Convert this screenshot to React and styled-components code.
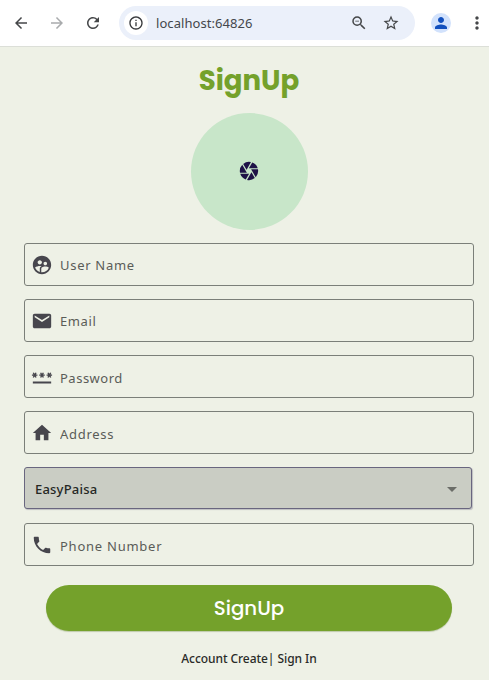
import React from 'react';
import styled, { createGlobalStyle } from 'styled-components';
import {
  MdArrowBack, MdArrowForward, MdRefresh, MdInfoOutline, MdZoomOut, MdStarBorder,
  MdPerson, MdMoreVert, MdCamera, MdSupervisedUserCircle, MdEmail, MdPassword,
  MdHome, MdPhone, MdArrowDropDown,
} from 'react-icons/md';

const GlobalStyle = createGlobalStyle`
  * { box-sizing: border-box; }
  body { margin: 0; background: #eef1e6; font-family: "Noto Sans", sans-serif; }
  button, input { font: inherit; }
`;

const Page = styled.div`
  height: 680px;
  overflow: hidden;
  background: #eef1e6;
`;

const Toolbar = styled.header`
  display: flex;
  align-items: center;
  height: 47px;
  padding: 0 4px 0 13px;
  background: #fff;
  border-bottom: 1px solid #dcdfd8;
`;

const ToolButton = styled.button`
  display: flex;
  align-items: center;
  justify-content: center;
  flex: none;
  width: 16px;
  height: 16px;
  padding: 0;
  margin-right: ${(p) => p.$gap || 0}px;
  border: 0;
  background: none;
  color: ${(p) => (p.$muted ? '#a9abad' : '#454749')};

  svg { flex: none; }
`;

const AddressBar = styled.div`
  display: flex;
  align-items: center;
  width: 296px;
  height: 34px;
  padding: 0 16px 0 5px;
  margin-right: 16px;
  border-radius: 17px;
  background: #ebf0fa;
`;

const SiteInfo = styled.span`
  display: grid;
  place-items: center;
  width: 24px;
  height: 24px;
  border-radius: 50%;
  background: #fff;
  color: #37393b;
`;

const Url = styled.span`
  flex: 1;
  margin-left: 8px;
  font-size: 13px;
  letter-spacing: 0.06px;
  color: #44474c;
`;

const Profile = styled.span`
  display: grid;
  place-items: center;
  width: 20px;
  height: 20px;
  margin-right: 18px;
  border-radius: 50%;
  background: #d2e2fc;
  color: #1250be;
`;

const Content = styled.main`
  display: flex;
  flex-direction: column;
  padding: 16px 15px 0 24px;
`;

const Title = styled.h1`
  margin: 0;
  height: 36px;
  font: 700 27.6px/36px Poppins, Inter, sans-serif;
  text-align: center;
  color: #74a12b;
`;

const Avatar = styled.div`
  display: grid;
  place-items: center;
  align-self: center;
  width: 117px;
  height: 117px;
  margin: 14px 0 13px;
  padding: 0 1px 1px 0;
  border-radius: 50%;
  background: #c8e6c9;
  color: #1e1247;
`;

const Form = styled.form`
  display: flex;
  flex-direction: column;
  gap: 13px;
`;

const Field = styled.label`
  display: flex;
  align-items: center;
  height: 43px;
  padding-left: 6px;
  border: 1px solid #7b7f79;
  border-radius: 3px;
  color: #47464d;

  svg { flex: none; }
`;

const Input = styled.input`
  flex: 1;
  min-width: 0;
  height: 30px;
  padding: ${(p) => (p.$low ? 3 : 1)}px 0 0;
  margin-left: 7px;
  border: 0;
  outline: 0;
  background: none;
  font-size: 13px;
  letter-spacing: ${(p) => p.$tracking}px;

  &::placeholder { color: #5a5c58; opacity: 1; }
`;

const Select = styled.button`
  display: flex;
  align-items: center;
  justify-content: space-between;
  width: 448px;
  height: 42px;
  margin-bottom: 1px;
  padding: 1px 7px 0 10px;
  border: 1px solid #69667f;
  border-radius: 3px;
  background: #cacdc4;
  box-shadow: 1px 1px 1px #bdbec0;
  color: #252724;
  font-size: 13px;
  font-weight: 500;
  letter-spacing: 0.2px;
`;

const Submit = styled.button`
  align-self: center;
  width: 406px;
  height: 46px;
  margin-top: 6px;
  padding: 0;
  border: 0;
  border-radius: 23px;
  background: #74a12b;
  box-shadow: 0 1px 1px #bdc9a9;
  color: #fff;
  font: 500 19.8px/46px Poppins, Inter, sans-serif;
`;

const Footer = styled.p`
  margin: 18px 0 0;
  text-align: center;
  font-size: 12px;
  line-height: 20px;
  font-weight: 500;
  letter-spacing: -0.06px;
  color: #292b28;
`;

const fields = [
  { label: 'User Name', icon: MdSupervisedUserCircle, tracking: 0.7 },
  { label: 'Email', icon: MdEmail, tracking: 0.6 },
  { label: 'Password', icon: MdPassword, tracking: 0.5, low: true },
  { label: 'Address', icon: MdHome, tracking: 0.7, low: true },
];

function TextField({ label, icon: Icon, tracking, low }) {
  return (
    <Field>
      <Icon size={22} />
      <Input placeholder={label} aria-label={label} $tracking={tracking} $low={low} />
    </Field>
  );
}

export default function App() {
  return (
    <Page>
      <GlobalStyle />
      <Toolbar>
        <ToolButton $gap={20} aria-label="Back"><MdArrowBack size={18} /></ToolButton>
        <ToolButton $gap={20} $muted aria-label="Forward"><MdArrowForward size={18} /></ToolButton>
        <ToolButton $gap={18} aria-label="Reload"><MdRefresh size={18} /></ToolButton>
        <AddressBar>
          <SiteInfo><MdInfoOutline size={16} /></SiteInfo>
          <Url>localhost:64826</Url>
          <ToolButton $gap={16} aria-label="Zoom"><MdZoomOut size={18} /></ToolButton>
          <ToolButton aria-label="Bookmark"><MdStarBorder size={18} /></ToolButton>
        </AddressBar>
        <Profile><MdPerson size={18} /></Profile>
        <ToolButton aria-label="Menu"><MdMoreVert size={20} /></ToolButton>
      </Toolbar>
      <Content>
        <Title>SignUp</Title>
        <Avatar><MdCamera size={22} /></Avatar>
        <Form>
          {fields.map((f) => <TextField key={f.label} {...f} />)}
          <Select type="button">EasyPaisa<MdArrowDropDown size={24} color="#6b6d68" /></Select>
          <TextField label="Phone Number" icon={MdPhone} tracking={0.75} low />
          <Submit type="button">SignUp</Submit>
        </Form>
        <Footer>Account Create| Sign In</Footer>
      </Content>
    </Page>
  );
}
